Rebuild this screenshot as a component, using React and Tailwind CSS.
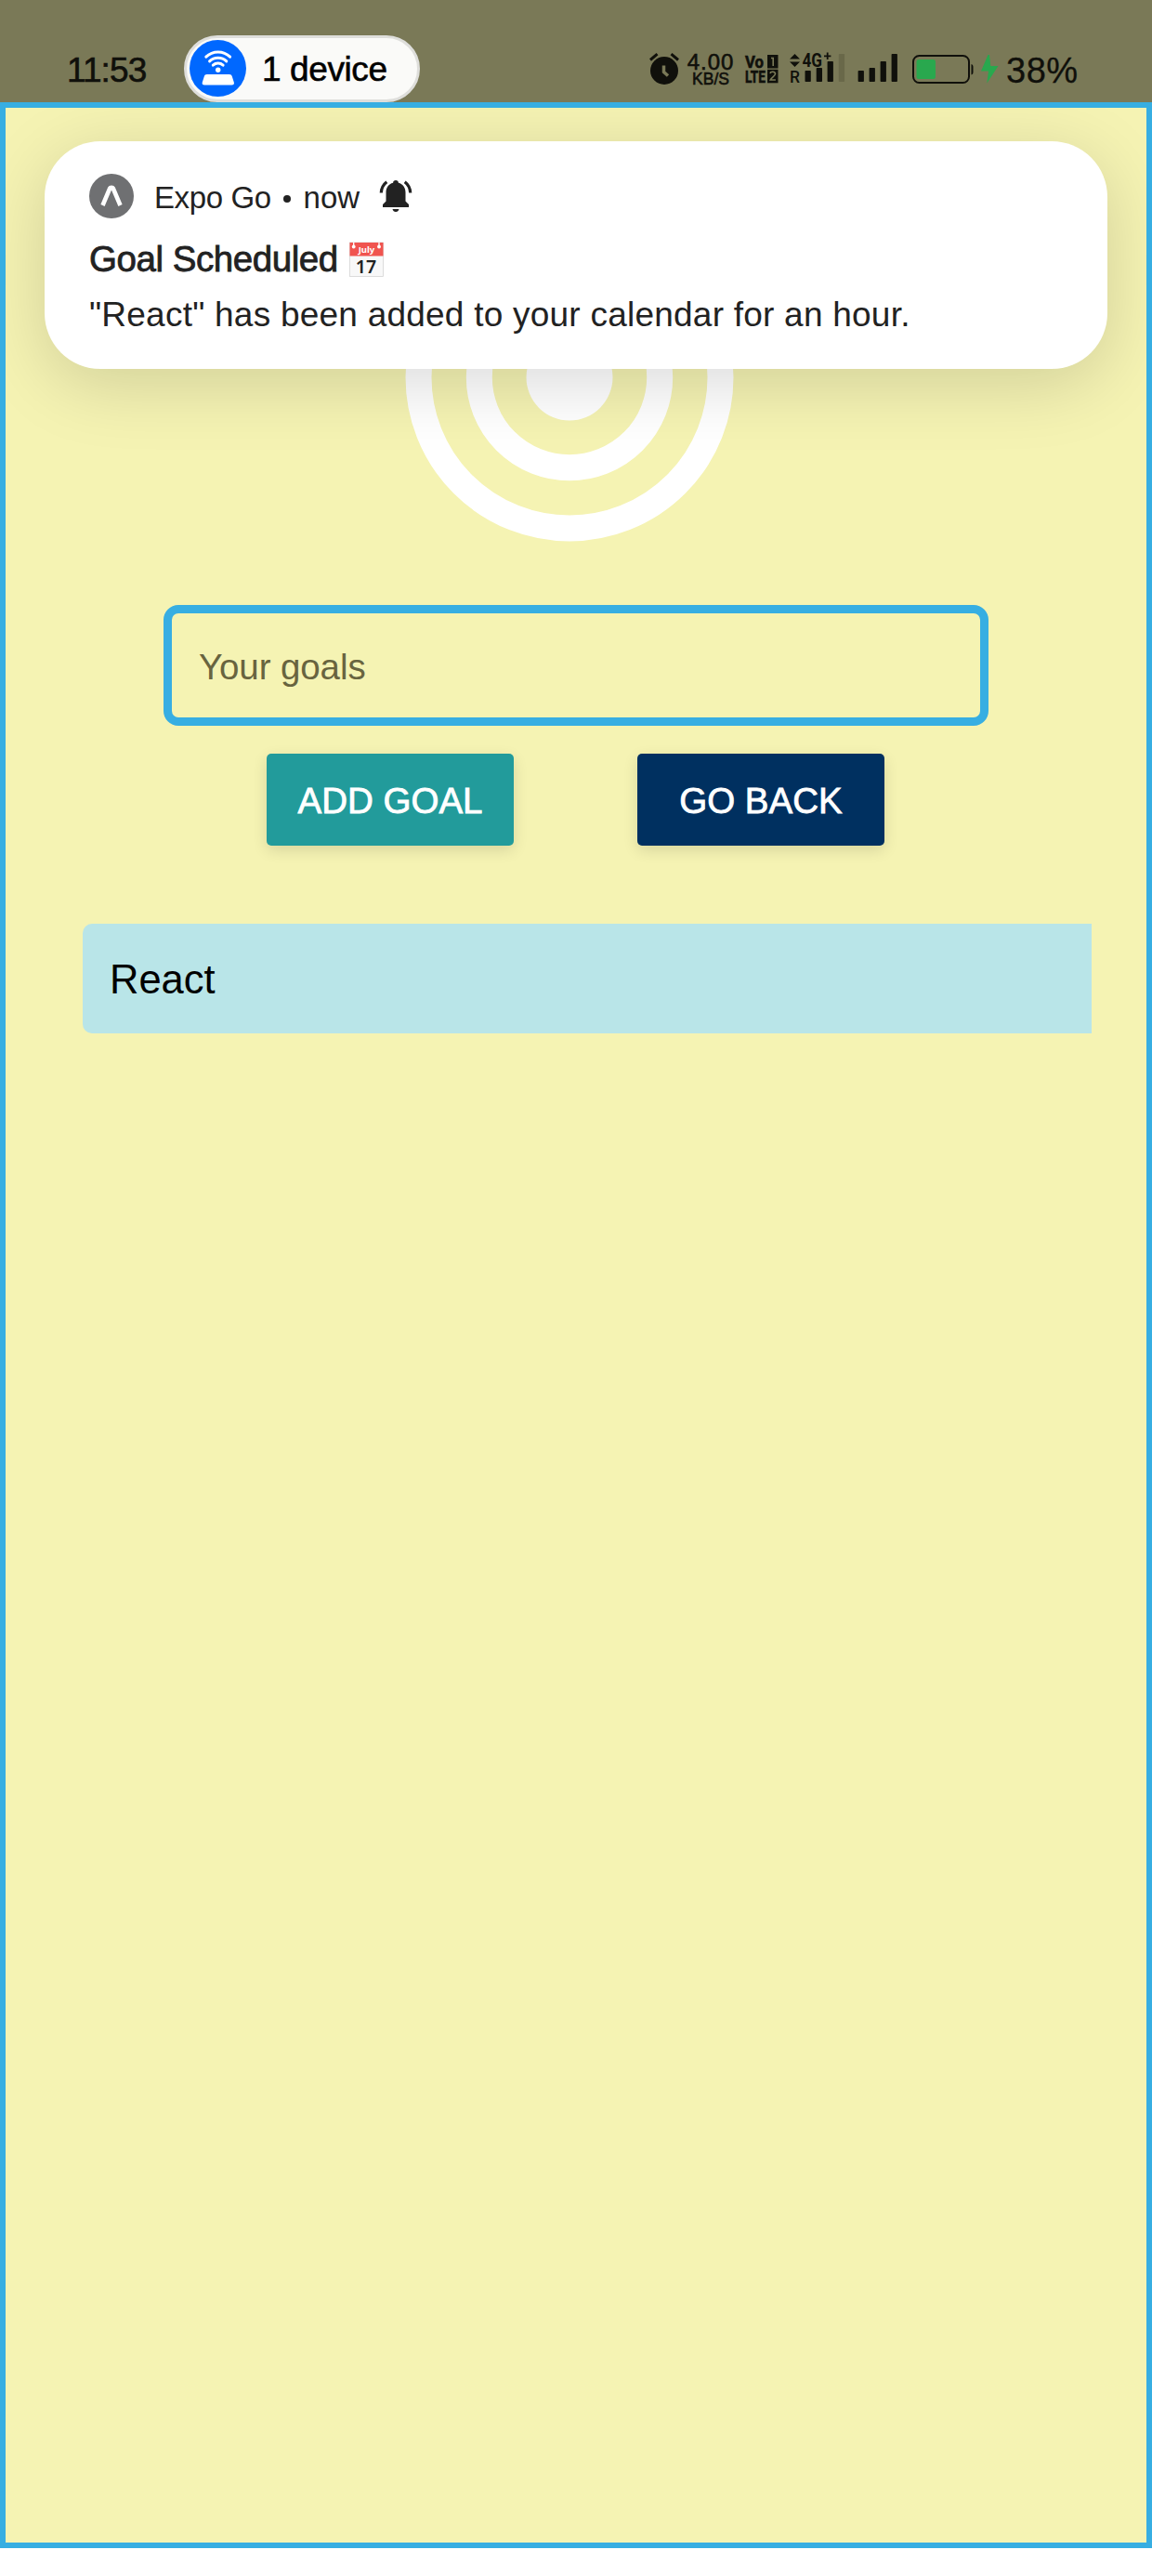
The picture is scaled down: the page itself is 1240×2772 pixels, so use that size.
import React from "react";

function DevicePill() {
  return (
    <div className="mt-[38px] ml-10 flex h-[72px] w-[254px] items-start rounded-full border-[3px] border-[#dededb] bg-[#fafaf8] pt-[2px] pl-[3px]">
      <svg width="61" height="61" viewBox="0 0 61 61" className="shrink-0">
        <circle cx="30.5" cy="30.5" r="30.5" fill="#0068ff" />
        <g fill="none" stroke="#fff" strokeWidth="3" strokeLinecap="round">
          <path d="M17.8 18.2a18.5 18.5 0 0 1 25.8 0" />
          <path d="M21.6 22.900a13 13 0 0 1 18.200 0" />
          <path d="M25.300 27.200a8 8 0 0 1 10.800 0" />
        </g>
        <circle cx="30.700" cy="32.300" r="2.700" fill="#fff" />
        <path d="M18.800 37h24c1.700 0 2.500.8 3 2.200l2 6.300c.6 1.900-.4 3-2.400 3H16.200c-2 0-3-1.100-2.400-3l2-6.300c.5-1.400 1.300-2.200 3-2.200z" fill="#fff" />
      </svg>
      <span className="mt-[12px] ml-[17px] text-[37px] leading-10 tracking-[-0.400px] whitespace-nowrap text-black [-webkit-text-stroke:0.6px_#000]">
        1 device
      </span>
    </div>
  );
}

function AlarmIcon() {
  return (
    <svg width="34" height="36" viewBox="0 0 34 36">
      <circle cx="17" cy="20" r="15" fill="#10100b" />
      <path d="M2 8.500 9.500 2.200M24.500 2.200 32 8.500" stroke="#10100b" strokeWidth="3" />
      <path d="M16.500 14.500v7l4.500 4" fill="none" stroke="#7a7957" strokeWidth="3.500" />
    </svg>
  );
}

function VolteIcon() {
  return (
    <div className="flex gap-[2px] pt-[3px] pl-[1px]">
      <svg width="22" height="32" viewBox="0 0 22 32" fill="#10100b" stroke="#10100b" strokeWidth="0.600" className="overflow-visible font-['Roboto',sans-serif] font-bold">
        <text x="0" y="14" fontSize="19" textLength="20" lengthAdjust="spacingAndGlyphs">Vo</text>
        <text x="0" y="30" fontSize="18.500" textLength="22" lengthAdjust="spacingAndGlyphs">LTE</text>
      </svg>
      <svg width="12" height="32" viewBox="0 0 12 32">
        <rect width="11.500" height="14.500" fill="#10100b" />
        <rect y="15.800" width="11.500" height="14.500" fill="#10100b" />
        <path d="M4 3.500h2.200v8.500" fill="none" stroke="#7a7957" strokeWidth="1.600" />
        <path d="M3 20c.5-2.500 5.500-2.300 5.500.6 0 2-4 3.500-5.300 6.400h5.700" fill="none" stroke="#7a7957" strokeWidth="1.600" />
      </svg>
    </div>
  );
}

function SignalIcons() {
  return (
    <svg width="120" height="36" viewBox="0 0 120 36" fill="#10100b" className="overflow-visible font-['Roboto',sans-serif]">
      <path d="M0 7.500 5.500 2 11 7.500zM0 10.500h11L5.500 16z" />
      <text x="0" y="33" fontSize="18" textLength="11" lengthAdjust="spacingAndGlyphs" fontWeight="500">R</text>
      <text x="13.500" y="15.500" fontSize="20" textLength="21.500" lengthAdjust="spacingAndGlyphs" fontWeight="700">4G</text>
      <path d="M37 3.400h2.800V.6h1.800v2.800h2.800v1.800h-2.800V8h-1.800V5.200H37z" />
      <rect x="16.500" y="20" width="6.300" height="12" rx="0.800" />
      <rect x="28.700" y="17" width="6.300" height="15" rx="0.800" />
      <rect x="40.600" y="10" width="6.300" height="22" rx="0.800" />
      <rect x="52.800" y="2" width="6.300" height="30" rx="0.800" fill="#696849" />
      <rect x="73.600" y="20" width="6.300" height="12" rx="0.800" />
      <rect x="85.600" y="17" width="6.300" height="15" rx="0.800" />
      <rect x="97.600" y="10" width="6.300" height="22" rx="0.800" />
      <rect x="109.600" y="2" width="6.300" height="30" rx="0.800" />
    </svg>
  );
}

function BatteryIcon() {
  return (
    <svg width="96" height="34" viewBox="0 0 96 34">
      <rect x="2" y="2" width="60" height="29" rx="6.500" fill="none" stroke="#10100b" strokeWidth="2" />
      <rect x="5.500" y="6" width="20.500" height="21" rx="2.500" fill="#29a84e" />
      <path d="M64.500 11c1.500.5 2 1.500 2 3v5.500c0 1.500-.5 2.500-2 3z" fill="#10100b" />
      <path d="M82.500 1 75 18.500h8L81.300 31.500 93.500 13h-8.200L84 1z" fill="#29a84e" />
    </svg>
  );
}

function StatusBar() {
  return (
    <header className="flex h-[110px] items-start bg-[#7a7957] text-[#10100b]">
      <span className="mt-[56px] ml-[72px] w-[86px] text-[37px] leading-10 tracking-[-0.900px] whitespace-nowrap [-webkit-text-stroke:0.6px_#10100b]">
        11:53
      </span>
      <DevicePill />
      <div className="mt-[56px] ml-[246px] flex items-start">
        <AlarmIcon />
        <div className="ml-[7px] flex w-[52px] flex-col items-center [-webkit-text-stroke:0.6px_#10100b]">
          <span className="text-[24px] leading-[22px] tracking-[1px]">4.00</span>
          <span className="text-[17.500px] leading-[15px]">KB/S</span>
        </div>
        <div className="ml-[10px]"><VolteIcon /></div>
        <div className="ml-[12px]"><SignalIcons /></div>
        <div className="mt-[2px] ml-[11px]"><BatteryIcon /></div>
        <span className="ml-[6px] text-[38px] leading-10 tracking-[0.500px] [-webkit-text-stroke:0.3px_#10100b]">38%</span>
      </div>
    </header>
  );
}

function BellIcon() {
  return (
    <svg width="36" height="36" viewBox="0 0 36 36" className="ml-[21px]">
      <path d="M18 1c1.700 0 2.900 1 2.900 2.700 5 1.300 7.600 5.400 7.600 10.300v9.500l3.500 3.500v3H4v-3l3.500-3.500V14c0-4.900 2.600-9 7.600-10.300C15.100 2 16.300 1 18 1z" fill="#222" />
      <path d="M14.500 32h7c-.5 2-1.700 3-3.500 3s-3-1-3.500-3z" fill="#222" />
      <path d="M8.300 2.700C4.600 5.500 2.500 9.500 2.300 14.500M27.700 2.700c3.700 2.800 5.800 6.800 6 11.800" fill="none" stroke="#222" strokeWidth="3.200" />
    </svg>
  );
}

function CalendarIcon() {
  return (
    <svg width="37" height="38" viewBox="0 0 37 38" className="ml-[12px] font-['Noto_Sans',sans-serif]">
      <rect x="0.500" y="1" width="36" height="36.500" fill="#f8f8f8" stroke="#cfcfcf" strokeWidth="0.700" />
      <path d="M.5 1h36v14.500H.5z" fill="#f0544f" />
      <path d="M4.700 1v4M32 1v4" stroke="#fff" strokeWidth="1.300" />
      <circle cx="4.700" cy="5.500" r="1.900" fill="#fff" />
      <circle cx="32" cy="5.500" r="1.900" fill="#fff" />
      <text x="18.500" y="11.700" fontSize="9.500" fontWeight="700" textAnchor="middle" fill="#fff">July</text>
      <text x="18" y="33.500" fontSize="19.500" fontWeight="600" textAnchor="middle" fill="#222">17</text>
    </svg>
  );
}

function Notification() {
  return (
    <section className="absolute top-[36px] left-[42px] flex h-[245px] w-[1144px] flex-col rounded-[60px] bg-white pl-12 text-[#222] shadow-[0_16px_76px_rgba(0,0,0,0.15)]">
      <div className="mt-[35px] flex h-12 items-center">
        <svg width="48" height="48" viewBox="0 0 48 48">
          <circle cx="24" cy="24" r="24" fill="#6f7072" />
          <path d="M14.500 34 22.300 15.500c.5-1.100 2.900-1.100 3.400 0L33.500 34" fill="none" stroke="#fff" strokeWidth="4.600" />
        </svg>
        <span className="mt-[4px] ml-[22px] text-[33px] leading-10 tracking-[-0.400px]">Expo Go</span>
        <span className="mt-[5px] ml-[13px] size-2 rounded-full bg-[#222]" />
        <span className="mt-[4px] ml-[14px] text-[33px] leading-10">now</span>
        <BellIcon />
      </div>
      <h2 className="mt-[24px] flex h-10 items-center text-[38.500px] leading-10 font-normal tracking-[-0.450px] [-webkit-text-stroke:0.8px_#222]">
        Goal Scheduled
        <span className="tracking-normal [-webkit-text-stroke:0]"><CalendarIcon /></span>
      </h2>
      <p className="mt-[20px] text-[37px] leading-10 tracking-[0.230px] whitespace-nowrap">
        "React" has been added to your calendar for an hour.
      </p>
    </section>
  );
}

function ActionButton({ children, color }) {
  return (
    <button
      className={
        "h-[99px] w-[266px] rounded-[5px] pt-[2px] text-[38.500px] whitespace-nowrap text-white shadow-[0_5px_16px_rgba(0,0,0,0.12)] [-webkit-text-stroke:0.8px_#fff] " +
        color
      }
    >
      {children}
    </button>
  );
}

export default function App() {
  return (
    <div className="h-[2772px] w-[1240px] overflow-hidden bg-white font-['Liberation_Sans',Arial,sans-serif]">
      <StatusBar />
      <main className="relative flex h-[2632px] flex-col overflow-hidden border-[6px] border-[#37aee2] bg-[#f5f3b3]">
        <svg width="354" height="354" viewBox="0 0 354 354" className="mt-[113px] ml-[430px] shrink-0">
          <circle cx="177" cy="177" r="162.500" fill="none" stroke="#fff" strokeWidth="28" />
          <circle cx="177" cy="177" r="97.200" fill="none" stroke="#fff" strokeWidth="28" />
          <circle cx="177" cy="177" r="46.500" fill="#fff" />
        </svg>
        <input
          placeholder="Your goals"
          className="mt-[68px] ml-[170px] h-[130px] w-[888px] shrink-0 rounded-[16px] border-[9px] border-[#37aee2] bg-transparent pt-[4px] pl-[29px] text-[38.500px] tracking-[-0.100px] placeholder:text-[#68643f] placeholder:opacity-100"
        />
        <div className="mt-[30px] ml-[281px] flex gap-[133px]">
          <ActionButton color="bg-[#229b9b]">ADD GOAL</ActionButton>
          <ActionButton color="bg-[#003060]">GO BACK</ActionButton>
        </div>
        <div className="mt-[84px] ml-[83px] flex h-[118px] w-[1086px] items-center rounded-l-[10px] bg-[#b9e5e8] pt-[2px] pl-[29px] text-[43.500px] leading-[50px] text-black">
          React
        </div>
        <Notification />
      </main>
    </div>
  );
}
